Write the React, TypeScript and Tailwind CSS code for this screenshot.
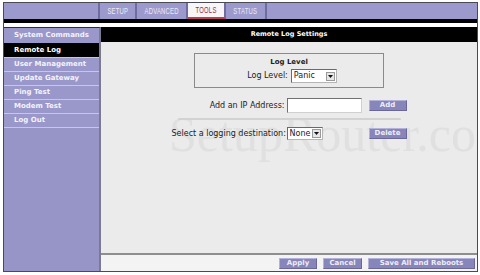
import React from "react";

function Tab({ w, children }: { w: string; children: React.ReactNode }) {
  return (
    <div className={`${w} shrink-0 border-r-2 border-[#6f6d9f] flex items-center justify-center`}>
      <span className="inline-block scale-x-[0.62] text-[9.5px] leading-none text-[#ecebf5] font-['Liberation_Sans',sans-serif] tracking-[0.4px]">
        {children}
      </span>
    </div>
  );
}

function Btn({ w, children }: { w: string; children: React.ReactNode }) {
  return (
    <div
      className={`${w} h-[11px] shrink-0 bg-[#8785ba] border border-t-[#b3b2d8] border-l-[#b3b2d8] border-r-[#6a6898] border-b-[#6a6898] flex items-center justify-center text-[7px] font-bold leading-none text-[#eeeef8]`}
    >
      {children}
    </div>
  );
}

function Select({ w, h, value }: { w: string; h: string; value: string }) {
  return (
    <div
      className={`${w} ${h} bg-white border border-t-[#6a6a6a] border-l-[#6a6a6a] border-r-[#b5b5b5] border-b-[#b5b5b5] flex items-center justify-between pl-[2px] pr-[1px] text-[8px] leading-none text-[#222]`}
    >
      <span>{value}</span>
      <span className="w-[9px] h-[9px] bg-[#e6e6e6] border border-[#9a9a9a] flex items-center justify-center">
        <svg width="5" height="3" viewBox="0 0 5 3">
          <path d="M0 0 L5 0 L2.5 3 Z" fill="#111" />
        </svg>
      </span>
    </div>
  );
}

const items = [
  "System Commands",
  "Remote Log",
  "User Management",
  "Update Gateway",
  "Ping Test",
  "Modem Test",
  "Log Out",
];

export default function App() {
  return (
    <div className="w-[480px] h-[275px] bg-white pt-[2px] pl-[3px] font-['DejaVu_Sans',Verdana,sans-serif]">
      <div className="w-[475px] h-[270px] border border-[#4a4a55] flex flex-col overflow-hidden">
        {/* header tabs */}
        <div className="h-[16px] shrink-0 flex bg-[#9c9acc]">
          <div className="w-[96px] shrink-0 border-r-2 border-[#6f6d9f]" />
          <Tab w="w-[37px]">SETUP</Tab>
          <Tab w="w-[51px]">ADVANCED</Tab>
          <div className="w-[38px] shrink-0 border-r-2 border-[#6f6d9f] bg-[#f7f5f6] border-b-2 border-b-[#c23a5c] flex items-center justify-center">
            <span className="inline-block scale-x-[0.62] text-[9.5px] leading-none text-[#9b2b48] font-['Liberation_Sans',sans-serif] tracking-[0.4px]">
              TOOLS
            </span>
          </div>
          <Tab w="w-[41px]">STATUS</Tab>
          <div className="flex-1" />
        </div>
        <div className="h-[4px] shrink-0 bg-black" />
        <div className="h-[4px] shrink-0 bg-white" />

        {/* body */}
        <div className="flex-1 flex min-h-0">
          {/* sidebar */}
          <div className="w-[97px] shrink-0 bg-[#9795c8] border-r-2 border-r-[#7c7b8e] border-t border-t-[#2a2a40] flex flex-col">
            {items.map((it, i) =>
              i === 0 ? (
                <div key={it} className="h-[15px] shrink-0 bg-[#9a98ca] pl-[10px] flex items-center text-[7px] font-bold leading-none text-[#f3f3fb]">
                  {it}
                </div>
              ) : i === 1 ? (
                <div key={it} className="h-[14px] shrink-0 bg-black pl-[10px] flex items-center text-[7px] font-bold leading-none text-white">
                  {it}
                </div>
              ) : i === items.length - 1 ? (
                <div key={it} className="h-[15px] shrink-0 bg-[#9a98ca] border-t border-b border-[#c8c7e3] pl-[10px] flex items-center text-[7px] font-bold leading-none text-[#f3f3fb]">
                  {it}
                </div>
              ) : (
                <div key={it} className="h-[14px] shrink-0 bg-[#9a98ca] border-t border-[#c8c7e3] pl-[10px] flex items-center text-[7px] font-bold leading-none text-[#f3f3fb]">
                  {it}
                </div>
              )
            )}
          </div>

          {/* main */}
          <div className="flex-1 flex flex-col min-w-0">
            <div className="h-[15px] shrink-0 bg-black flex items-center justify-center text-white text-[6.5px] font-bold leading-none">
              Remote Log Settings
            </div>
            <div className="flex-1 relative bg-[#ebebeb] overflow-hidden">
              <div className="absolute left-[68px] top-[67px] whitespace-nowrap text-[50px] leading-none text-[#e0e0e0] font-['Liberation_Serif',serif] pointer-events-none">
                SetupRouter.com
              </div>
              <div className="relative flex flex-col items-center">
                {/* Log level box */}
                <div className="mt-[11px] w-[190px] h-[35px] border border-[#8a8a8a] flex flex-col items-center pt-[4px]">
                  <div className="h-[9px] flex items-center text-[7px] font-bold leading-none text-[#222]">
                    Log Level
                  </div>
                  <div className="mt-[2px] h-[14px] flex items-center gap-[3px] pl-[6px]">
                    <span className="text-[8px] leading-none text-[#222]">Log Level:</span>
                    <Select w="w-[46px]" h="h-[14px]" value="Panic" />
                  </div>
                </div>

                {/* table */}
                <div className="mt-[10px] w-[235px] flex flex-col">
                  <div className="h-[15px] grid grid-cols-[115px_82px_38px] items-center">
                    <div className="text-right pr-[2px] text-[8px] leading-none text-[#222]">Add an IP Address:</div>
                    <div className="w-[75px] h-[15px] bg-white border border-t-[#707070] border-l-[#707070] border-r-[#d0d0d0] border-b-[#d0d0d0]" />
                    <Btn w="w-[38px]">Add</Btn>
                  </div>
                  <div className="mt-[5px] ml-[6px] w-[223px] h-[2px] rounded-full bg-[#d2d2d2]" />
                  <div className="mt-[7px] h-[13px] grid grid-cols-[115px_82px_38px] items-center">
                    <div className="text-right pr-[3px] text-[8px] leading-none text-[#222] whitespace-nowrap">Select a logging destination:</div>
                    <Select w="w-[36px]" h="h-[13px]" value="None" />
                    <Btn w="w-[38px]">Delete</Btn>
                  </div>
                </div>
              </div>
            </div>
            <div className="h-[2px] shrink-0 bg-[#8e8e8e]" />
            <div className="h-[16px] shrink-0 bg-[#f3f3f3] flex items-center justify-end gap-[6px] pr-[2px]">
              <Btn w="w-[38px]">Apply</Btn>
              <Btn w="w-[39px]">Cancel</Btn>
              <Btn w="w-[107px]">Save All and Reboots</Btn>
            </div>
          </div>
        </div>
      </div>
    </div>
  );
}
